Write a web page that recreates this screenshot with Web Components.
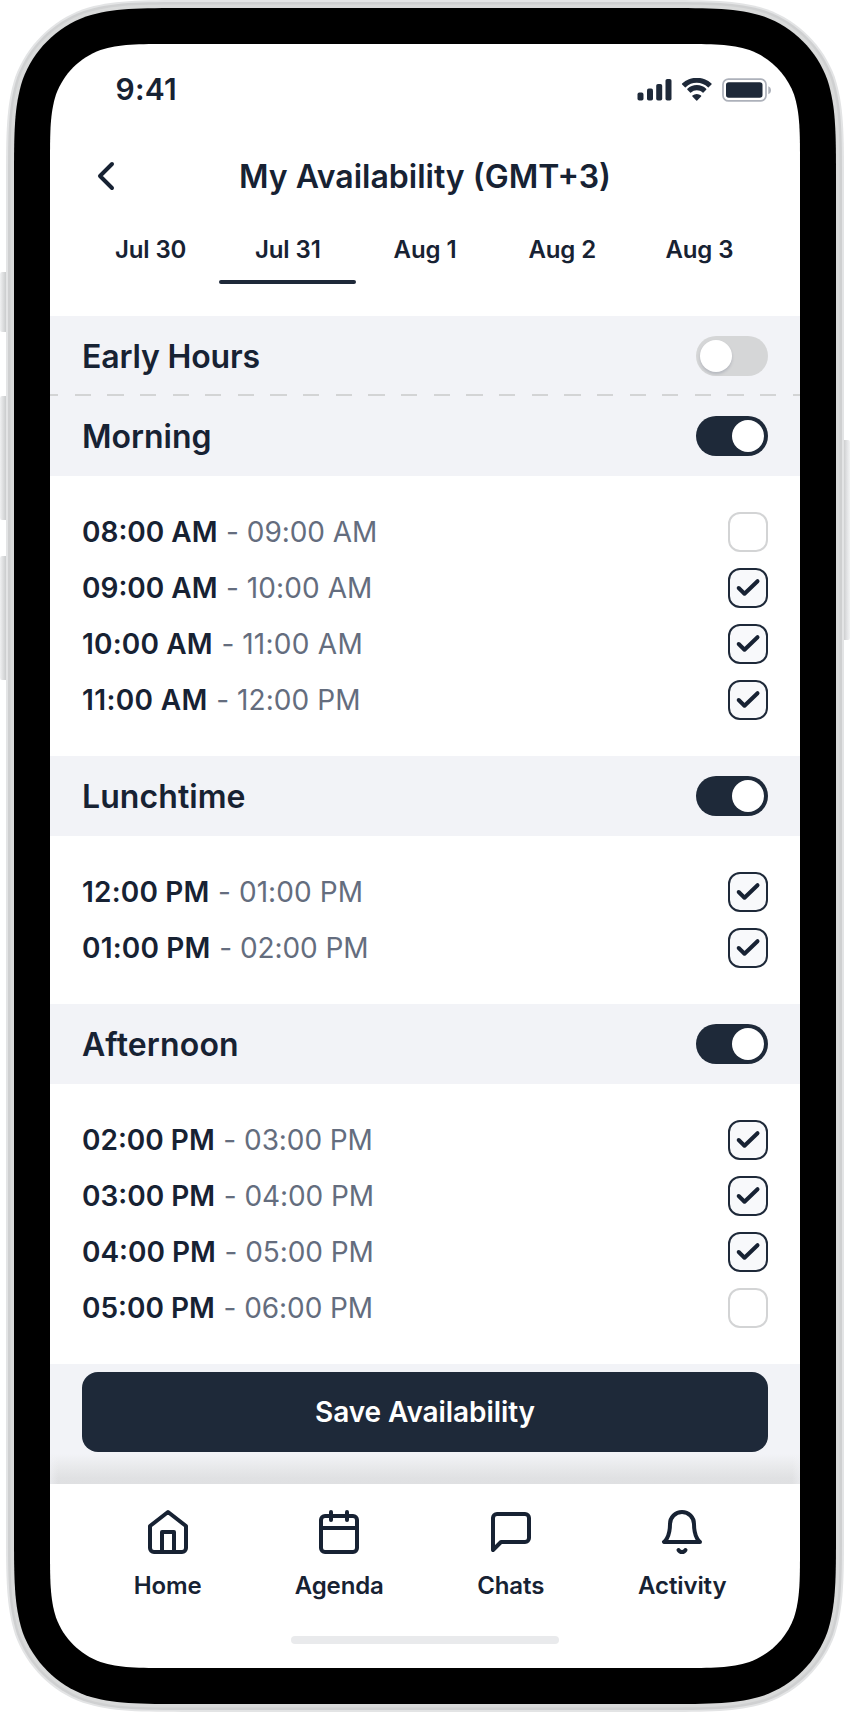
<!DOCTYPE html>
<html lang="en">
<head>
<meta charset="utf-8">
<title>My Availability</title>
<style>
html,body{margin:0;background:#fff}
body{width:850px;height:1712px;overflow:hidden;font-family:Inter,"Liberation Sans",sans-serif;color:#172233;--ink:#1e2939;--band:#f2f3f7;--line:#d3d4d5}
</style>
</head>
<body>
<phone-frame>
  <status-bar>9:41</status-bar>
  <app-header>My Availability (GMT+3)</app-header>
  <day-tabs>
    <day-tab>Jul 30</day-tab><day-tab selected>Jul 31</day-tab><day-tab>Aug 1</day-tab><day-tab>Aug 2</day-tab><day-tab>Aug 3</day-tab>
  </day-tabs>
  <time-section heading="Early Hours" tracking="-.16" dashed></time-section>
  <time-section heading="Morning" on>
    <time-slot from="08:00 AM" to="09:00 AM"></time-slot>
    <time-slot from="09:00 AM" to="10:00 AM" checked></time-slot>
    <time-slot from="10:00 AM" to="11:00 AM" checked></time-slot>
    <time-slot from="11:00 AM" to="12:00 PM" checked></time-slot>
  </time-section>
  <time-section heading="Lunchtime" tracking=".08" on>
    <time-slot from="12:00 PM" to="01:00 PM" checked></time-slot>
    <time-slot from="01:00 PM" to="02:00 PM" checked></time-slot>
  </time-section>
  <time-section heading="Afternoon" tracking=".16" on>
    <time-slot from="02:00 PM" to="03:00 PM" checked></time-slot>
    <time-slot from="03:00 PM" to="04:00 PM" checked></time-slot>
    <time-slot from="04:00 PM" to="05:00 PM" checked></time-slot>
    <time-slot from="05:00 PM" to="06:00 PM"></time-slot>
  </time-section>
  <save-bar>Save Availability</save-bar>
  <bottom-nav>
    <nav-item icon="home">Home</nav-item><nav-item icon="agenda">Agenda</nav-item><nav-item icon="chats">Chats</nav-item><nav-item icon="activity">Activity</nav-item>
  </bottom-nav>
</phone-frame>
<script>
const define = (name, render) => customElements.define(name, class extends HTMLElement {
  connectedCallback() {
    if (!this.shadowRoot) this.attachShadow({mode: 'open'}).innerHTML = render(this);
  }
});

// Rounded rectangle with continuous-curvature corners.
const squircle = (x0, y0, x1, y1, r) => {
  const a = 1.528665*r, b = 1.088493*r, c = .868407*r, d = .631494*r, e = .074911*r, f = .372824*r, g = .16906*r;
  const pt = (cx, cy, sx, sy) => (u, v) => `${(cx+sx*u).toFixed(2)} ${(cy+sy*v).toFixed(2)}`;
  const corner = (p, flip) => {
    const q = flip ? (u, v) => p(v, u) : p;
    return `${q(0,a)}C${q(0,b)} ${q(0,c)} ${q(e,d)}C${q(g,f)} ${q(f,g)} ${q(d,e)}C${q(c,0)} ${q(b,0)} ${q(a,0)}`;
  };
  return `M${corner(pt(x0,y0,1,1))}L${corner(pt(x1,y0,-1,1),true)}L${corner(pt(x1,y1,-1,-1))}L${corner(pt(x0,y1,1,-1),true)}Z`;
};

define('phone-frame', () => `
<style>
:host{display:grid;width:850px;height:1712px}
svg{grid-area:1/1;display:block}
main{grid-area:1/1;margin:44px 50px;display:flex;flex-direction:column;width:750px;height:1624px}
</style>
<svg width="850" height="1712" viewBox="0 0 850 1712">
  <defs>
    <linearGradient id="l"><stop stop-color="#f0f1f2"/><stop offset=".45" stop-color="#dfe0e1"/><stop offset="1" stop-color="#cacccd"/></linearGradient>
    <linearGradient id="r"><stop stop-color="#cfd0d1"/><stop offset=".5" stop-color="#e2e3e5"/><stop offset="1" stop-color="#f2f3f4"/></linearGradient>
  </defs>
  <path fill="url(#l)" d="M2 272h4v60H2a2 2 0 0 1-2-2v-56a2 2 0 0 1 2-2zM2 396h4v124H2a2 2 0 0 1-2-2V398a2 2 0 0 1 2-2zM2 556h4v124H2a2 2 0 0 1-2-2V558a2 2 0 0 1 2-2z"/>
  <path fill="url(#r)" d="M844 440h4a2 2 0 0 1 2 2v196a2 2 0 0 1-2 2h-4z"/>
  <path fill="#e3e4e5" d="${squircle(6,0,844,1712,122)}"/>
  <path fill="#cfd0d1" d="${squircle(8,2,842,1710,120)}"/>
  <path fill="#d9dada" d="${squircle(10.5,4.5,839.5,1707.5,117.5)}"/>
  <path fill="#000" d="${squircle(14,8,836,1704,114)}"/>
  <path fill="#fff" d="${squircle(50,44,800,1668,80)}"/>
</svg>
<main><slot></slot></main>`);

define('status-bar', () => `
<style>
:host{display:flex;height:88px;box-sizing:border-box;padding:2px 27px 0 65.500px;align-items:center;justify-content:space-between;font-size:30px;font-weight:600;letter-spacing:.2px}
svg{margin-top:2px}
</style>
<span><slot></slot></span>
<svg width="136" height="24" viewBox="0 0 136 24" fill="#1e2939">
  <rect x="0.5" y="14.6" width="6" height="8" rx="1.8"/><rect x="10" y="10.6" width="6" height="12" rx="1.8"/><rect x="19.2" y="6" width="6" height="16.6" rx="1.8"/><rect x="28.5" y="1" width="6" height="21.600" rx="1.800"/>
  <path d="M59.800 4.800c4.200 0 8.100 1.600 11.100 4.400.3.300.6.300.8 0l2.800-2.800c.3-.3.200-.6 0-.8a21.400 21.400 0 0 0-29.400 0c-.3.200-.3.500 0 .8l2.800 2.800c.2.300.6.300.8 0a16 16 0 0 1 11.100-4.400z"/>
  <path d="M59.800 12.200c2.200 0 4.200.8 5.800 2.300.3.300.6.300.9 0l2.700-2.800c.3-.3.300-.6 0-.9a13.700 13.700 0 0 0-18.800 0c-.3.300-.3.600 0 .9l2.700 2.800c.3.300.6.300.9 0a8.500 8.500 0 0 1 5.800-2.300z"/>
  <path d="M64.100 17.500c.3.300.3.600 0 .9l-3.900 4c-.3.300-.6.300-.9 0l-3.900-4c-.3-.3-.2-.6 0-.9a6.700 6.700 0 0 1 8.700 0z"/>
  <rect x="86" y="1.100" width="43" height="21.800" rx="5.500" fill="#fff" stroke="#adb1ba" stroke-width="1.700"/>
  <rect x="89" y="4.300" width="36.500" height="15.500" rx="2.800"/>
  <path d="M131.300 8.300v8c1.700-.7 2.700-2.200 2.700-4s-1-3.300-2.700-4z" fill="#adb1ba"/>
</svg>`);

define('app-header', () => `
<style>
:host{display:grid;grid-template-columns:56px 1fr 56px;height:88px;padding:0 32px;align-items:center}
h1{margin:2px 0 0;font-size:32px;font-weight:600;line-height:40px;text-align:center;white-space:nowrap}
svg{display:block}
</style>
<svg width="48" height="48" viewBox="0 0 48 48" fill="none" stroke="#172233" stroke-width="4" stroke-linecap="round" stroke-linejoin="round"><path d="M30 12 18 24l12 12"/></svg>
<h1><slot></slot></h1>`);

define('day-tabs', () => `
<style>:host{display:flex;height:64px;margin:0 32px 32px}</style><slot></slot>`);

define('day-tab', () => `
<style>
:host{flex:1;display:flex;flex-direction:column;justify-content:space-between;text-align:center;font-size:24px;font-weight:600;line-height:32px;letter-spacing:-.1px}
span{padding-top:14px}
i{height:4px;border-radius:2px}
:host([selected]) i{background:var(--ink)}
</style><span><slot></slot></span><i></i>`);

define('toggle-switch', () => `
<style>
:host{display:flex;box-sizing:border-box;width:72px;height:40px;padding:4px;border-radius:20px;background:#d5d6d7}
i{width:32px;height:32px;border-radius:50%;background:#fff;box-shadow:0 2px 3px #2a375730}
:host([on]){background:var(--ink);justify-content:flex-end}
:host([on]) i{box-shadow:none}
</style><i></i>`);

define('time-section', el => `
<style>
:host{display:block}
header{display:flex;box-sizing:border-box;height:80px;padding:0 32px;align-items:center;justify-content:space-between;background:var(--band)}
:host([dashed]) header{background:repeating-linear-gradient(90deg,var(--line) 0 16.300px,transparent 16.300px 32.640px) -8px 78px/calc(100% + 8px) 2px no-repeat,var(--band)}
h2{margin:2px 0 0;font-size:32px;font-weight:600;line-height:40px;letter-spacing:${el.getAttribute('tracking') || 0}px}
div{padding:28px 32px}
</style>
<header><h2>${el.getAttribute('heading')}</h2><toggle-switch ${el.hasAttribute('on') ? 'on' : ''}></toggle-switch></header>
${el.children.length ? '<div><slot></slot></div>' : ''}`);

define('check-box', () => `
<style>
:host{display:block;box-sizing:border-box;width:40px;height:40px;border:2px solid var(--line);border-radius:12px;background:#fff}
svg{display:none}
:host([checked]){border-color:var(--ink);background:#f8f9fb}
:host([checked]) svg{display:block}
</style>
<svg width="36" height="36" viewBox="0 0 36 36" fill="none" stroke="#172233" stroke-width="4" stroke-linecap="round" stroke-linejoin="round"><path d="M8.700 18 14.500 23.700 27.500 11.200"/></svg>`);

// The digit 1 is narrow: open up the times that hold it.
const tracking = (time, base, step) => `letter-spacing:${(base + step * time.split('1').slice(1).length).toFixed(2)}px`;
define('time-slot', el => {
  const from = el.getAttribute('from'), to = el.getAttribute('to');
  return `
<style>
:host{display:flex;height:56px;align-items:center;justify-content:space-between;font-size:28px;line-height:36px;color:#646d7e}
b{font-weight:600;color:#172233;margin-right:.7px;${tracking(from, 0, .18)}}
span span{${tracking(to, -.08, .17)}}
</style>
<span><b>${from}</b> - <span>${to}</span></span><check-box ${el.hasAttribute('checked') ? 'checked' : ''}></check-box>`;
});

define('save-bar', () => `
<style>
:host{display:block;box-sizing:border-box;height:120px;padding:8px 32px 32px;background:linear-gradient(90deg,#f2f3f780,#f2f3f700 8px calc(100% - 8px),#f2f3f780) 0 100%/100% 30px no-repeat,linear-gradient(#f2f3f7 90px,#e9eaec 102px,#e0e1e3 114px,#dfe0e2)}
button{display:block;width:100%;height:80px;border:0;border-radius:16px;background:var(--ink);color:#fff;font:600 28px/36px Inter,"Liberation Sans",sans-serif;letter-spacing:-.08px}
</style><button><slot></slot></button>`);

define('bottom-nav', () => `
<style>
:host{display:flex;flex-direction:column;height:184px;align-items:center;justify-content:space-between}
nav{display:flex;width:686px;padding-top:24px}
i{width:268px;height:8px;border-radius:4px;background:#e9eaec;margin-bottom:24px}
</style><nav><slot></slot></nav><i></i>`);

const icons = {
  home: '<path d="M6 18 24 4l18 14v22a4 4 0 0 1-4 4H10a4 4 0 0 1-4-4z"/><path d="M18 44V24h12v20"/>',
  agenda: '<rect x="6" y="8" width="36" height="36" rx="4"/><path d="M16 4v8M32 4v8M6 20h36"/>',
  chats: '<path d="M42 30a4 4 0 0 1-4 4H14l-8 8V10a4 4 0 0 1 4-4h28a4 4 0 0 1 4 4z"/>',
  activity: '<path d="M36 16a12 12 0 0 0-24 0c0 14-6 18-6 18h36s-6-4-6-18"/><path d="M27.500 42a4 4 0 0 1-7 0"/>'
};
define('nav-item', el => `
<style>
:host{flex:1;display:flex;flex-direction:column;align-items:center;font-size:24px;font-weight:600;line-height:32px;letter-spacing:-.12px;gap:14px}
</style>
<svg width="48" height="48" viewBox="0 0 48 48" fill="none" stroke="#172233" stroke-width="4" stroke-linecap="round" stroke-linejoin="round">${icons[el.getAttribute('icon')]}</svg>
<span><slot></slot></span>`);
</script>
</body>
</html>
